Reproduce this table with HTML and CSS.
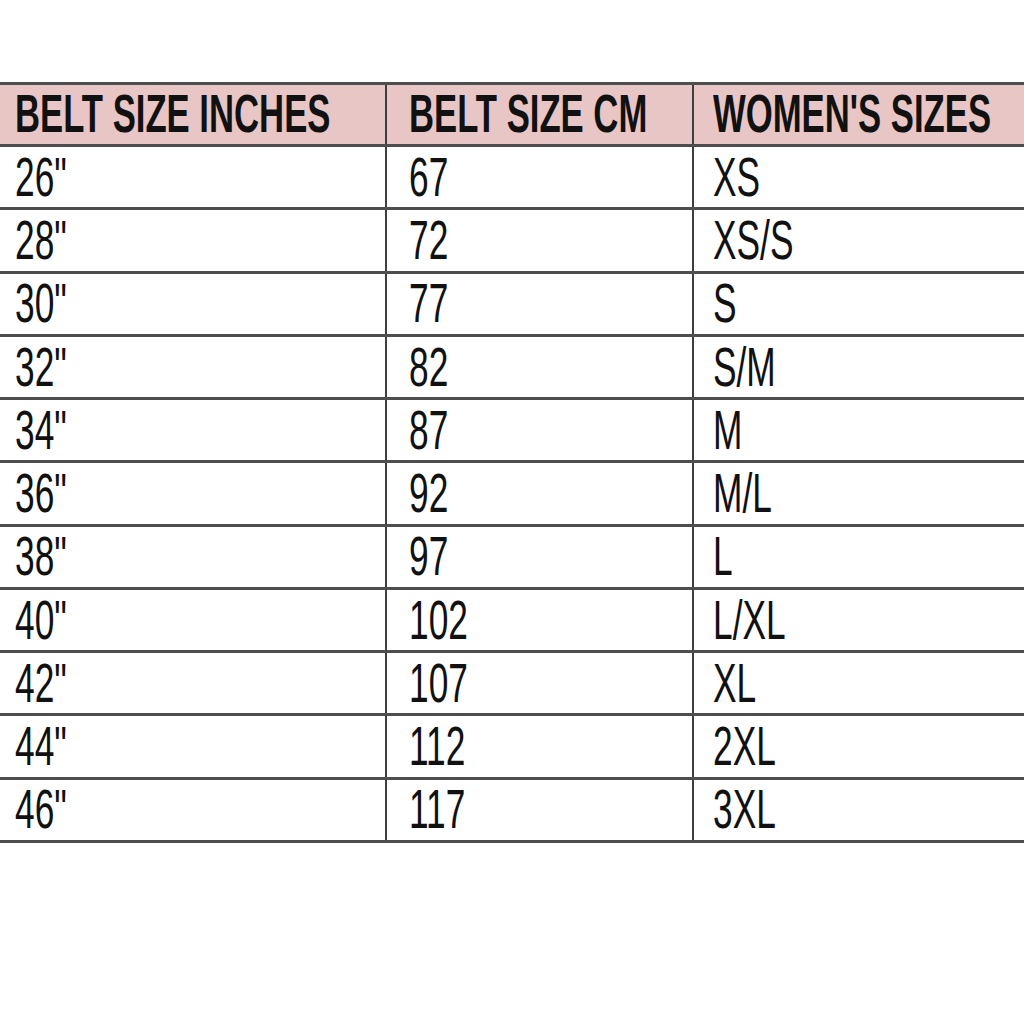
FILE: index.html
```html
<!DOCTYPE html>
<html>
<head>
<meta charset="utf-8">
<link rel="stylesheet" href="styles.css">
</head>
<body>
<div class="chart">
  <div class="row head">
    <div class="cell"><span>BELT SIZE INCHES</span></div>
    <div class="cell"><span>BELT SIZE CM</span></div>
    <div class="cell"><span>WOMEN'S SIZES</span></div>
  </div>
  <div class="row"><div class="cell"><span>26"</span></div><div class="cell"><span>67</span></div><div class="cell"><span>XS</span></div></div>
  <div class="row"><div class="cell"><span>28"</span></div><div class="cell"><span>72</span></div><div class="cell"><span>XS/S</span></div></div>
  <div class="row"><div class="cell"><span>30"</span></div><div class="cell"><span>77</span></div><div class="cell"><span>S</span></div></div>
  <div class="row"><div class="cell"><span>32"</span></div><div class="cell"><span>82</span></div><div class="cell"><span>S/M</span></div></div>
  <div class="row"><div class="cell"><span>34"</span></div><div class="cell"><span>87</span></div><div class="cell"><span>M</span></div></div>
  <div class="row"><div class="cell"><span>36"</span></div><div class="cell"><span>92</span></div><div class="cell"><span>M/L</span></div></div>
  <div class="row"><div class="cell"><span>38"</span></div><div class="cell"><span>97</span></div><div class="cell"><span>L</span></div></div>
  <div class="row"><div class="cell"><span>40"</span></div><div class="cell"><span>102</span></div><div class="cell"><span>L/XL</span></div></div>
  <div class="row"><div class="cell"><span>42"</span></div><div class="cell"><span>107</span></div><div class="cell"><span>XL</span></div></div>
  <div class="row"><div class="cell"><span>44"</span></div><div class="cell"><span>112</span></div><div class="cell"><span>2XL</span></div></div>
  <div class="row"><div class="cell"><span>46"</span></div><div class="cell"><span>117</span></div><div class="cell"><span>3XL</span></div></div>
</div>
</body>
</html>
```
FILE: styles.css
```css
html, body {
  margin: 0;
  padding: 0;
  background: #ffffff;
}
body {
  padding-top: 82px;
  font-family: "Liberation Sans", Arial, sans-serif;
  color: #111;
}
.chart {
  border-top: 3px solid #4e4e4e;
}
.row {
  display: grid;
  grid-template-columns: 385px 307px minmax(0, 1fr);
  height: 63.25px;
  box-sizing: border-box;
  border-bottom: 3px solid #4e4e4e;
}
.head {
  height: 62px;
  background: #e8c6c5;
}
.cell {
  min-width: 0;
  display: flex;
  align-items: center;
  white-space: nowrap;
  box-sizing: border-box;
  padding-left: 15px;
  padding-bottom: 1px;
  font-size: 35.3px;
}
.cell + .cell {
  border-left: 2px solid #3e3e3e;
  padding-left: 22px;
}
.cell + .cell + .cell {
  padding-left: 19px;
}
.cell span {
  display: inline-block;
  line-height: 1;
  transform: scaleY(1.587);
  transform-origin: 50% 50%;
}
.head .cell {
  font-size: 34.7px;
  font-weight: bold;
  padding-bottom: 0;
}
.head .cell span {
  transform: scaleY(1.527);
}
```
